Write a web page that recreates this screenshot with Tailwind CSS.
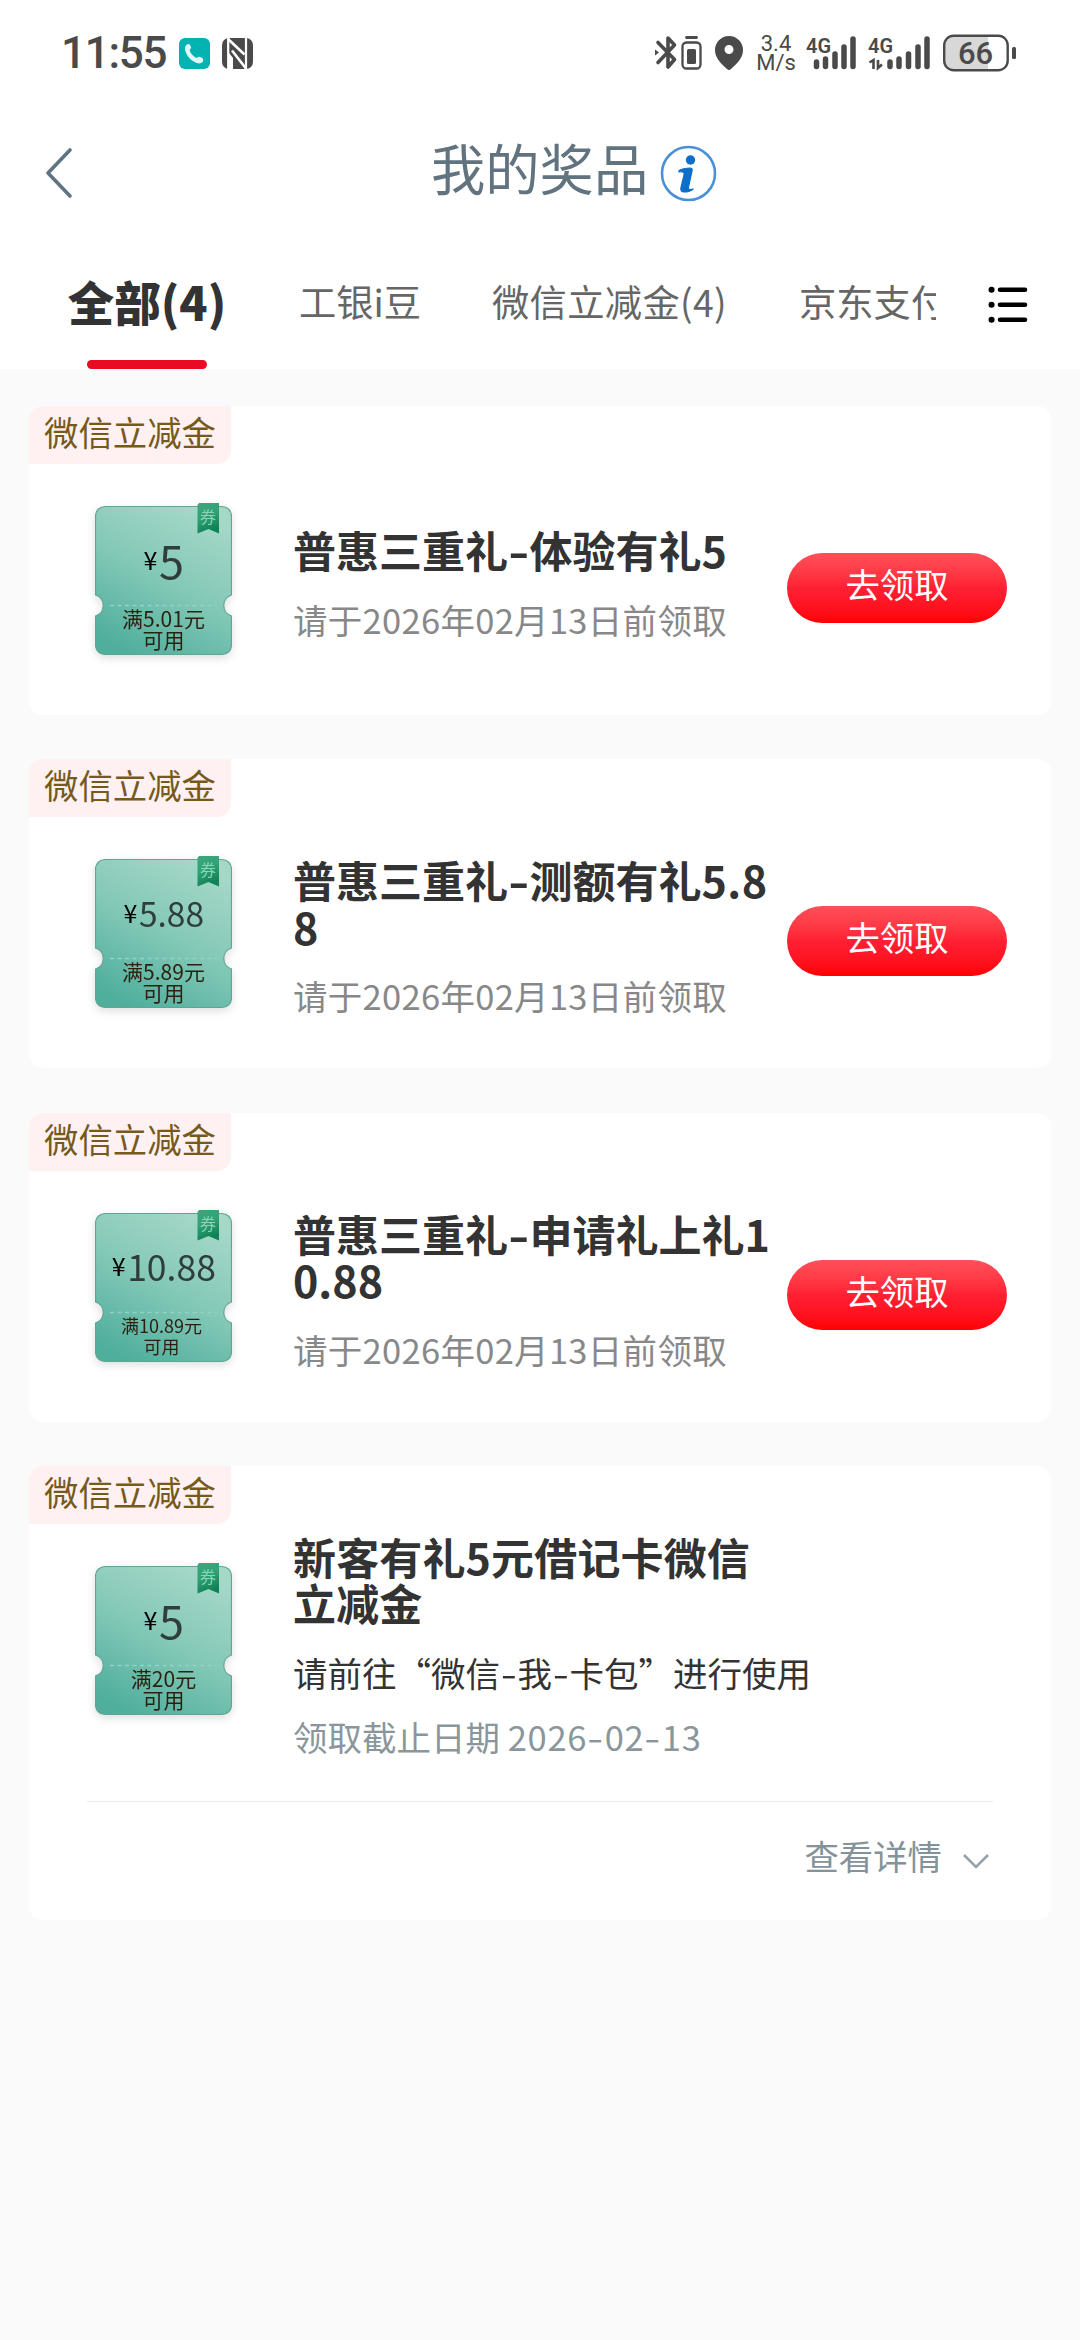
<!DOCTYPE html>
<html lang="zh-CN">
<head>
<meta charset="utf-8">
<title>我的奖品</title>
<script src="https://cdn.jsdelivr.net/npm/@tailwindcss/browser@4"></script>
</head>
<body class="bg-[#fafafa] w-[1080px] h-[2340px] overflow-hidden font-['Noto_Sans_CJK_SC',sans-serif] text-[#333]">

<!-- shared ticket artwork -->
<svg width="0" height="0" class="absolute">
  <defs>
    <linearGradient id="tg" x1="0.75" y1="0" x2="0.25" y2="1">
      <stop offset="0" stop-color="#a6d8c8"/><stop offset="0.5" stop-color="#83c8b7"/><stop offset="1" stop-color="#4fae9c"/>
    </linearGradient>
    <linearGradient id="rg" x1="0" y1="0" x2="0.3" y2="1">
      <stop offset="0" stop-color="#3fa57c"/><stop offset="0.5" stop-color="#2fa377"/><stop offset="1" stop-color="#0f8355"/>
    </linearGradient>
    <symbol id="ticket" viewBox="0 0 137 155" overflow="visible">
      <path d="M10 5.500H127a9.500 9.500 0 0 1 9.500 9.500V94a11 11 0 0 0 0 21V144a9.500 9.500 0 0 1-9.500 9.500H10a9.500 9.500 0 0 1-9.500-9.500V115a11 11 0 0 0 0-21V15A9.500 9.500 0 0 1 10 5.500Z" fill="url(#tg)" stroke="#62a594" stroke-width="1.200"/>
      <path d="M15 104.500H122" stroke="#93d2c2" stroke-width="1.500" stroke-dasharray="4 3.500"/>
      <path d="M104 2H124V32.500L113.500 28 102.500 32.500V4Z" fill="url(#rg)"/>
    </symbol>
  </defs>
</svg>

<header class="bg-white h-[369px]">
  <!-- status bar -->
  <div class="flex items-center h-[106px] pl-[61px] text-[#4a4a4a]">
    <span class="font-[Roboto] font-medium text-[44px] leading-[44px] w-[118px] tracking-[-1.300px] whitespace-nowrap">11:55</span>
    <svg width="31" height="31" viewBox="0 0 31 31"><rect width="31" height="31" rx="6" fill="#03b3b2"/><path d="M8 6.500c2-1.500 3.500.5 4 2.500.4 1.700-1.500 2.300-1.200 3.500.8 3 3 5.500 6.200 7.300 1.200.6 2-1.500 3.600-1 2.200.7 4.500 2 3.400 4.500-1.200 2.700-5 2.700-8.500.8C10 20.800 7 16.500 6 11.500c-.4-2 .5-4 2-5Z" fill="#dff7f7"/></svg>
    <svg class="ml-[12px]" width="31" height="31" viewBox="0 0 31 31"><rect width="31" height="31" rx="7" fill="#4a4a4a"/><path d="M6.200 0V31M24 0V31" stroke="#fff" stroke-width="2.200"/><path d="M6 1 22.500 16.500M10 12.500 24 30.500" stroke="#fff" stroke-width="2.600" fill="none"/><path d="M7 15 11 20V31H7Z" fill="#fff"/></svg>

    <svg class="ml-[402px]" width="48" height="36" viewBox="0 0 48 36" fill="none" stroke="#4a4a4a">
      <path d="M3 7.500 19.500 24.500 13 32V3L19.500 10 3 27.500" stroke-width="3.600" stroke-linejoin="round" stroke-linecap="round"/>
      <path d="M0 14.500 4 17.500 0 20.500Z" fill="#4a4a4a" stroke="none"/>
      <rect x="27.500" y="7.500" width="18" height="26" rx="4" stroke-width="2.300"/><path d="M31.500 2.500H41.500" stroke-width="2.800" stroke-linecap="round"/><rect x="32" y="14" width="9" height="15" rx="1.500" fill="#4a4a4a" stroke="none"/>
    </svg>
    <svg class="ml-[12px]" width="28" height="34" viewBox="0 0 28 34"><path fill-rule="evenodd" d="M14 0a14 14 0 0 1 14 14.500C28 22 21 28.500 16 33a3 3 0 0 1-4 0C7 28.500 0 22 0 14.500A14 14 0 0 1 14 0Zm0 9a4.500 4.500 0 1 0 0 9 4.500 4.500 0 0 0 0-9Z" fill="#4a4a4a"/></svg>
    <div class="ml-[12px] w-[42px] flex flex-col items-center font-[Roboto] text-[22px] leading-[19px]"><span>3.4</span><span>M/s</span></div>
    <svg class="ml-[9px]" width="52" height="36" viewBox="0 0 52 36" overflow="visible"><text x="0" y="17.500" font-family="Roboto" font-weight="600" font-size="21" textLength="25" lengthAdjust="spacingAndGlyphs" fill="#4a4a4a">4G</text><path d="M10.500 27V31.500M19.500 24V31.500M29 19V31.500M38 12V31.500M47 4V31.500" stroke="#4a4a4a" stroke-width="5.500" stroke-linecap="round"/></svg>
    <svg class="ml-[10px]" width="63" height="36" viewBox="0 0 63 36" overflow="visible"><text x="0" y="17.500" font-family="Roboto" font-weight="600" font-size="21" textLength="25" lengthAdjust="spacingAndGlyphs" fill="#4a4a4a">4G</text><path d="M1.500 27.500 5.500 25V34M10 25V33L14 29.500" fill="none" stroke="#4a4a4a" stroke-width="2.600"/><path d="M22 27V31.500M31 24V31.500M40.500 19V31.500M50 12V31.500M59 4V31.500" stroke="#4a4a4a" stroke-width="5.500" stroke-linecap="round"/></svg>
    <svg class="ml-[12px]" width="74" height="38" viewBox="0 0 74 38"><path d="M12 2H45V36H12A10 10 0 0 1 2 26V12A10 10 0 0 1 12 2Z" fill="#d8d8d8"/><rect x="1.200" y="1.700" width="63.500" height="34.600" rx="9.500" fill="none" stroke="#4a4a4a" stroke-width="2.400"/><rect x="69" y="13" width="4" height="12" rx="1.500" fill="#4a4a4a"/><text x="32.500" y="30" text-anchor="middle" font-family="Roboto" font-weight="500" font-size="31" fill="#4a4a4a">66</text></svg>
  </div>

  <!-- title bar -->
  <div class="flex items-center h-[134px]">
    <svg class="ml-[45px]" width="30" height="52" viewBox="0 0 30 52" fill="none" stroke="#5f7482" stroke-width="3.600" stroke-linecap="round" stroke-linejoin="round"><path d="M25 3 3 26 25 49"/></svg>
    <h1 class="ml-[356px] -mt-[12px] text-[54.300px] leading-[60px] text-[#61737f] w-[217px] whitespace-nowrap">我的奖品</h1>
    <svg class="ml-[12px]" width="57" height="57" viewBox="0 0 57 57"><circle cx="28.500" cy="28.500" r="26.500" fill="#fff" stroke="#4a90d6" stroke-width="2.600"/><circle cx="30.500" cy="15" r="4.700" fill="#0e6fcb"/><path d="M19 25.500c3-1.800 7-2.500 11-2.500 2 0 2.500 1 2 3l-3.600 16.500c-.5 2 1 2.500 5 1.500-3 2.500-6 3-9 3-3.500 0-4-2-3.400-4.500l3-12.500c.6-2.500-.6-3.800-5-3Z" fill="#0e6fcb" stroke="#0e6fcb" stroke-width="1.200"/></svg>
  </div>

  <!-- tabs -->
  <nav class="flex h-[129px]">
    <div class="flex w-[936px] overflow-hidden whitespace-nowrap text-[37.300px] leading-[60px] text-[#666]">
      <div class="ml-[69px] w-[156px] flex flex-col items-center shrink-0">
        <span class="mt-[31px] h-[60px] text-[46.500px] font-black text-[#333]">全部(4)</span>
        <span class="mt-[29px] w-[120px] h-[9px] rounded-full bg-[#ea0a23]"></span>
      </div>
      <span class="ml-[74px] mt-[31px] w-[193px] shrink-0">工银i豆</span>
      <span class="mt-[31px] w-[307px] shrink-0 tracking-[0.300px]">微信立减金(4)</span>
      <span class="mt-[31px] shrink-0">京东支付</span>
    </div>
    <svg class="ml-[51px] mt-[46px]" width="42" height="38" viewBox="0 0 42 38" stroke="#000" stroke-width="4.600" stroke-linecap="round"><path d="M13 3.700H38M13 18.700H38M13 33.700H38"/><path d="M4.500 3.700h.1M4.500 18.700h.1M4.500 33.700h.1" stroke-width="6"/></svg>
  </nav>
</header>

<main class="pt-[37px] px-[29px] flex flex-col gap-[44.300px]">

  <section class="bg-white rounded-[14px] h-[309px] w-[1022px]">
    <div class="w-[202px] h-[58px] pl-[15px] rounded-tl-[14px] rounded-br-[14px] bg-[#fff1f2] text-[#765a1c] text-[34.400px] leading-[50px]">微信立减金</div>
    <div class="flex h-[251px]">
      <div class="relative ml-[66px] mt-[37px] w-[137px] h-[155px] drop-shadow-[0_3px_4px_rgba(0,0,0,0.13)]">
        <svg class="absolute inset-0" width="137" height="155"><use href="#ticket"/></svg>
        <div class="relative h-[108px] pt-[9px] flex items-center justify-center leading-none"><span class="text-[25px] text-black w-[15px] flex justify-center">¥</span><span class="text-[45px] text-[#2f3d3c] ml-[1px]">5</span></div>
        <div class="relative text-center text-[21px] leading-[21px] text-[#2c1f0e] -mt-[1px]">满5.01元<br>可用</div>
        <span class="absolute left-[104px] top-[5px] w-[18px] text-center text-[16px] leading-[20px] text-[#8bd3b4]">券</span>
      </div>
      <div class="ml-[61px] w-[494px] h-[240px] flex flex-col justify-center">
        <h2 class="text-[43px] leading-[46.500px] font-bold whitespace-nowrap">普惠三重礼<span class="inline-block w-[21.500px] text-center scale-x-135">-</span>体验有礼<span class="tracking-[1px]">5</span></h2>
        <p class="mt-[23px] text-[34.500px] leading-[46px] text-[#888] whitespace-nowrap tracking-[0.300px]">请于2026年02月13日前领取</p>
      </div>
      <button class="mt-[89px] w-[220px] h-[70px] pb-[10px] rounded-full bg-linear-to-b from-[#ff4f59] via-[#ff1f33] to-[#fe0000] text-white text-[34.400px] leading-[60px]">去领取</button>
    </div>
  </section>

  <section class="bg-white rounded-[14px] h-[309px] w-[1022px]">
    <div class="w-[202px] h-[58px] pl-[15px] rounded-tl-[14px] rounded-br-[14px] bg-[#fff1f2] text-[#765a1c] text-[34.400px] leading-[50px]">微信立减金</div>
    <div class="flex h-[251px]">
      <div class="relative ml-[66px] mt-[37px] w-[137px] h-[155px] drop-shadow-[0_3px_4px_rgba(0,0,0,0.13)]">
        <svg class="absolute inset-0" width="137" height="155"><use href="#ticket"/></svg>
        <div class="relative h-[108px] pt-[8px] flex items-center justify-center leading-none"><span class="text-[25px] text-black w-[15px] flex justify-center">¥</span><span class="text-[33.500px] text-[#2f3d3c] ml-[1px]">5.88</span></div>
        <div class="relative text-center text-[21px] leading-[21px] text-[#2c1f0e] -mt-[1px]">满5.89元<br>可用</div>
        <span class="absolute left-[104px] top-[5px] w-[18px] text-center text-[16px] leading-[20px] text-[#8bd3b4]">券</span>
      </div>
      <div class="ml-[61px] w-[494px] h-[240px] flex flex-col justify-center">
        <h2 class="text-[43px] leading-[46.500px] font-bold whitespace-nowrap">普惠三重礼<span class="inline-block w-[21.500px] text-center scale-x-135">-</span>测额有礼<span class="tracking-[0.500px]">5.8</span><br>8</h2>
        <p class="mt-[23px] text-[34.500px] leading-[46px] text-[#888] whitespace-nowrap tracking-[0.300px]">请于2026年02月13日前领取</p>
      </div>
      <button class="mt-[89px] w-[220px] h-[70px] pb-[10px] rounded-full bg-linear-to-b from-[#ff4f59] via-[#ff1f33] to-[#fe0000] text-white text-[34.400px] leading-[60px]">去领取</button>
    </div>
  </section>

  <section class="bg-white rounded-[14px] h-[309px] w-[1022px]">
    <div class="w-[202px] h-[58px] pl-[15px] rounded-tl-[14px] rounded-br-[14px] bg-[#fff1f2] text-[#765a1c] text-[34.400px] leading-[50px]">微信立减金</div>
    <div class="flex h-[251px]">
      <div class="relative ml-[66px] mt-[37px] w-[137px] h-[155px] drop-shadow-[0_3px_4px_rgba(0,0,0,0.13)]">
        <svg class="absolute inset-0" width="137" height="155"><use href="#ticket"/></svg>
        <div class="relative h-[108px] pt-[8px] flex items-center justify-center leading-none"><span class="text-[25px] text-black w-[15px] flex justify-center">¥</span><span class="text-[35.500px] text-[#2f3d3c] ml-[1px]">10.88</span></div>
        <div class="relative text-center text-[18px] leading-[21px] text-[#2c1f0e] pr-[4px] -mt-[1px]">满10.89元<br>可用</div>
        <span class="absolute left-[104px] top-[5px] w-[18px] text-center text-[16px] leading-[20px] text-[#8bd3b4]">券</span>
      </div>
      <div class="ml-[61px] w-[494px] h-[240px] flex flex-col justify-center">
        <h2 class="text-[43px] leading-[46.500px] font-bold whitespace-nowrap">普惠三重礼<span class="inline-block w-[21.500px] text-center scale-x-135">-</span>申请礼上礼1<br>0.88</h2>
        <p class="mt-[23px] text-[34.500px] leading-[46px] text-[#888] whitespace-nowrap tracking-[0.300px]">请于2026年02月13日前领取</p>
      </div>
      <button class="mt-[89px] w-[220px] h-[70px] pb-[10px] rounded-full bg-linear-to-b from-[#ff4f59] via-[#ff1f33] to-[#fe0000] text-white text-[34.400px] leading-[60px]">去领取</button>
    </div>
  </section>

  <section class="bg-white rounded-[14px] h-[454px] w-[1022px]">
    <div class="w-[202px] h-[58px] pl-[15px] rounded-tl-[14px] rounded-br-[14px] bg-[#fff1f2] text-[#765a1c] text-[34.400px] leading-[50px]">微信立减金</div>
    <div class="flex h-[277px]">
      <div class="relative ml-[66px] mt-[37px] w-[137px] h-[155px] drop-shadow-[0_3px_4px_rgba(0,0,0,0.13)]">
        <svg class="absolute inset-0" width="137" height="155"><use href="#ticket"/></svg>
        <div class="relative h-[108px] pt-[9px] flex items-center justify-center leading-none"><span class="text-[25px] text-black w-[15px] flex justify-center">¥</span><span class="text-[45px] text-[#2f3d3c] ml-[1px]">5</span></div>
        <div class="relative text-center text-[21px] leading-[21px] text-[#2c1f0e] -mt-[1px]">满20元<br>可用</div>
        <span class="absolute left-[104px] top-[5px] w-[18px] text-center text-[16px] leading-[20px] text-[#8bd3b4]">券</span>
      </div>
      <div class="ml-[61px] pt-[9px] whitespace-nowrap">
        <h2 class="text-[43px] leading-[46.500px] font-bold tracking-[0.150px]">新客有礼5元借记卡微信<br>立减金</h2>
        <p class="mt-[23px] text-[34.500px] leading-[46px]">请前往“微信<span class="inline-block w-[17.500px] text-center scale-x-135">-</span>我<span class="inline-block w-[17.500px] text-center scale-x-135">-</span>卡包”进行使用</p>
        <p class="mt-[18px] text-[34.500px] leading-[46px] text-[#8a969b]">领取截止日期 <span class="tracking-[0.700px]">2026<span class="inline-block w-[17.500px] text-center scale-x-135">-</span>02<span class="inline-block w-[17.500px] text-center scale-x-135">-</span>13</span></p>
      </div>
    </div>
    <div class="ml-[58px] w-[906px] border-t border-[#e8eaeb] flex justify-end items-start pr-[3px] text-[34.400px] leading-[46px] text-[#84929a]">
      <span class="mt-[30px]">查看详情</span>
      <svg class="ml-[20px] mt-[51px]" width="28" height="17" viewBox="0 0 28 17" fill="none" stroke="#98a2a7" stroke-width="2.600"><path d="M2 2 14 14 26 2"/></svg>
    </div>
  </section>
</main>
</body>
</html>
